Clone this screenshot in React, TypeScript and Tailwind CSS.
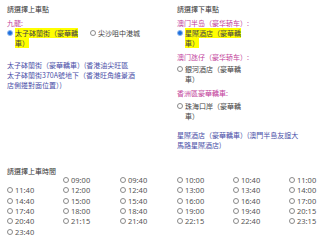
const cjk = { fontFamily: '"Noto Sans CJK TC", "Noto Sans CJK SC", sans-serif' };

function Radio({ checked = false }: { checked?: boolean }) {
  return checked ? (
    <span className="w-[6px] h-[6px] shrink-0 rounded-full bg-[#1d6fdc] border border-[#8fb8ef]" />
  ) : (
    <span className="w-[6px] h-[6px] shrink-0 rounded-full border border-[#8a8a8a] bg-white" />
  );
}

function Option({
  lines,
  checked,
  className = "",
}: {
  lines: string[];
  checked?: boolean;
  className?: string;
}) {
  return (
    <div className={`flex items-start gap-[2px] ${className}`}>
      <span className="h-[10px] flex items-center">
        <Radio checked={checked} />
      </span>
      <span className="text-[7px] leading-[10px] text-[#444] whitespace-nowrap">
        {lines.map((l, i) => (
          <span key={i} className="block">
            <span className={checked ? "bg-[#ffff00]" : ""}>{l}</span>
          </span>
        ))}
      </span>
    </div>
  );
}

function Label({ text, className = "" }: { text: string; className?: string }) {
  return (
    <div className={`text-[7px] leading-[10px] text-[#c2419b] whitespace-nowrap ${className}`}>
      {text}
    </div>
  );
}

function Address({ lines, className = "" }: { lines: string[]; className?: string }) {
  return (
    <div className={`text-[7px] leading-[10px] text-[#4a4fa8] whitespace-nowrap ${className}`}>
      {lines.map((l, i) => (
        <div key={i}>{l}</div>
      ))}
    </div>
  );
}

const times = [
  "", "09:00", "09:40", "10:00", "10:40", "11:00",
  "11:40", "12:00", "12:40", "13:00", "13:40", "14:00",
  "14:40", "15:00", "15:40", "16:00", "16:40", "17:00",
  "17:40", "18:00", "18:40", "19:00", "19:40", "20:15",
  "20:40", "21:15", "21:40", "22:15", "22:40", "23:15",
  "23:40",
];

export default function App() {
  return (
    <div className="w-[320px] h-[241px] bg-white overflow-hidden pl-[7px]" style={cjk}>
      <div className="flex pt-[4px]">
        {/* pick-up */}
        <div className="w-[170px] shrink-0">
          <div className="text-[7px] leading-[10px] text-[#333]">請選擇上車點</div>
          <Label text="九龍:" className="mt-[4px]" />
          <div className="flex">
            <Option checked lines={["太子砵蘭街（豪華轎", "車）"]} className="w-[83px]" />
            <Option lines={["尖沙咀中港城"]} />
          </div>
          <Address
            className="mt-[12px]"
            lines={[
              "太子砵蘭街（豪華轎車）(香港油尖旺區",
              "太子砵蘭街370A號地下（香港旺角維景酒",
              "店側邊對面位置）)",
            ]}
          />
        </div>

        {/* drop-off */}
        <div className="flex-1">
          <div className="text-[7px] leading-[10px] text-[#333]">請選擇下車點</div>
          <Label text="澳门半岛（豪华轿车）:" className="mt-[4px]" />
          <Option checked lines={["星際酒店（豪華轎", "車）"]} />
          <Label text="澳门氹仔（豪华轿车）:" className="mt-[4px]" />
          <Option lines={["銀河酒店（豪華轎", "車）"]} className="mt-[2px]" />
          <Label text="香洲區豪華轎車:" className="mt-[4px]" />
          <Option lines={["珠海口岸（豪華轎", "車）"]} className="mt-[3px]" />
          <Address
            className="mt-[9px]"
            lines={["星際酒店（豪華轎車）(澳門半島友誼大", "馬路星際酒店)"]}
          />
        </div>
      </div>

      <div className="mt-[16px] text-[7px] leading-[10px] text-[#333]">請選擇上車時間</div>
      <div
        className="grid grid-cols-[56px_57px_57px_56px_56px_30px] mt-[-1px]"
        style={{ fontFamily: '"Noto Sans", sans-serif' }}
      >
        {times.map((t, i) => (
          <div key={i} className="h-[10.3px] flex items-center gap-[2px]">
            {t && (
              <>
                <Radio />
                <span className="text-[7.5px] leading-[10px] text-[#555]">{t}</span>
              </>
            )}
          </div>
        ))}
      </div>
    </div>
  );
}
